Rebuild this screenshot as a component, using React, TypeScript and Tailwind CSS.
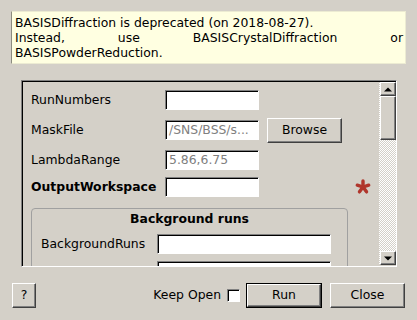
import React from 'react';

const font = { fontFamily: '"DejaVu Sans", Verdana, sans-serif' };

const Field: React.FC<{ w: string; value?: string }> = ({ w, value }) => (
  <div
    className={`${w} h-[20px] bg-white border border-t-[#808080] border-l-[#808080] border-r-white border-b-white shadow-[inset_1px_1px_0_#000] flex items-center pl-[3px] text-[#808080] overflow-hidden whitespace-nowrap`}
  >
    {value}
  </div>
);

const Button: React.FC<{ w: string; label: string; isDefault?: boolean }> = ({ w, label, isDefault }) => {
  const inner = (
    <div className="w-full h-full flex items-center justify-center border border-t-white border-l-white border-r-[#404040] border-b-[#404040] shadow-[inset_-1px_-1px_0_#808080] bg-[#d4d0c8]">
      {label}
    </div>
  );
  if (isDefault) {
    return <div className={`${w} h-[25px] border border-black`}>{inner}</div>;
  }
  return <div className={`${w} h-[25px]`}>{inner}</div>;
};

const Arrow: React.FC<{ up?: boolean }> = ({ up }) => (
  <svg width="8" height="5" viewBox="0 0 8 5">
    {up ? <polygon points="0,4.5 8,4.5 4,0.5" fill="#000" /> : <polygon points="0,0.5 8,0.5 4,4.5" fill="#000" />}
  </svg>
);

const Star: React.FC = () => (
  <svg width="16" height="16" viewBox="-8 -8 16 16">
    {[-90, -18, 54, 126, 198].map((a) => (
      <line
        key={a}
        x1="0"
        y1="0"
        x2={(6 * Math.cos((a * Math.PI) / 180)).toFixed(2)}
        y2={(6 * Math.sin((a * Math.PI) / 180)).toFixed(2)}
        stroke="#b0362c"
        strokeWidth="3.4"
        strokeLinecap="round"
      />
    ))}
  </svg>
);

export default function App() {
  return (
    <div className="w-[417px] h-[320px] bg-[#d4d0c8] text-[12.4px] text-black flex flex-col overflow-hidden" style={font}>
      {/* deprecation notice */}
      <div className="mt-[11px] ml-[11px] w-[395px] h-[53px] bg-[#ffffe1] border border-[#ecebd2] border-l-[#8c8c80] pt-[3px] pl-[3px] pr-[2px] leading-[15px] text-justify">
        BASISDiffraction is deprecated (on 2018-08-27).
        <br />
        <span className="block text-justify [text-align-last:justify]">Instead, use BASISCrystalDiffraction or</span>
        BASISPowderReduction.
      </div>

      {/* scroll area */}
      <div className="mt-[16px] ml-[21px] w-[376px] h-[187px] border border-t-[#808080] border-l-[#808080] border-r-white border-b-white shadow-[inset_1px_1px_0_#000] flex">
        <div className="flex-1 overflow-hidden pl-[9px] pt-[9px]">
          <div className="flex items-center h-[20px]">
            <div className="w-[134px]">RunNumbers</div>
            <Field w="w-[94px]" />
          </div>
          <div className="flex items-center h-[20px] mt-[10px]">
            <div className="w-[134px]">MaskFile</div>
            <Field w="w-[94px]" value="/SNS/BSS/s..." />
            <div className="ml-[8px]">
              <Button w="w-[75px]" label="Browse" />
            </div>
          </div>
          <div className="flex items-center h-[20px] mt-[10px]">
            <div className="w-[134px]">LambdaRange</div>
            <Field w="w-[94px]" value="5.86,6.75" />
          </div>
          <div className="flex items-center h-[20px] mt-[7px]">
            <div className="w-[134px] font-bold">OutputWorkspace</div>
            <Field w="w-[94px]" />
            <div className="ml-[96px] flex items-center">
              <Star />
            </div>
          </div>

          {/* group box */}
          <div className="mt-[11px] w-[317px] h-[80px] border border-[#a0a0a0] rounded-[4px] pl-[9px]">
            <div className="pt-[3px] leading-[14px] font-bold text-center pr-[9px]">Background runs</div>
            <div className="flex items-center h-[20px] mt-[8px]">
              <div className="w-[116px]">BackgroundRuns</div>
              <Field w="w-[174px]" />
            </div>
            <div className="flex items-center h-[20px] mt-[7px]">
              <div className="w-[116px]"></div>
              <Field w="w-[174px]" />
            </div>
          </div>
        </div>

        {/* scrollbar */}
        <div className="w-[17px] mt-[1px] mb-[1px] flex flex-col items-center bg-[image:repeating-conic-gradient(#ffffff_0_25%,#d4d0c8_0_50%)] bg-[length:2px_2px]">
          <div className="w-[16px] h-[14px] bg-[#d4d0c8] border border-t-white border-l-white border-r-[#404040] border-b-[#404040] shadow-[inset_-1px_-1px_0_#808080] flex items-center justify-center">
            <Arrow up />
          </div>
          <div className="w-[16px] h-[44px] bg-[#d4d0c8] border border-t-white border-l-white border-r-[#404040] border-b-[#404040] shadow-[inset_-1px_-1px_0_#808080]" />
          <div className="flex-1" />
          <div className="w-[16px] h-[14px] bg-[#d4d0c8] border border-t-white border-l-white border-r-[#404040] border-b-[#404040] shadow-[inset_-1px_-1px_0_#808080] flex items-center justify-center">
            <Arrow />
          </div>
        </div>
      </div>

      {/* bottom buttons */}
      <div className="mt-[16px] flex items-center px-[12px]">
        <Button w="w-[24px]" label="?" />
        <div className="flex-1" />
        <span>Keep Open</span>
        <div className="ml-[6px] w-[13px] h-[13px] bg-white border border-t-[#808080] border-l-[#808080] border-r-white border-b-white shadow-[inset_1px_1px_0_#000]" />
        <div className="ml-[6px]">
          <Button w="w-[76px]" label="Run" isDefault />
        </div>
        <div className="ml-[8px]">
          <Button w="w-[75px]" label="Close" />
        </div>
      </div>
    </div>
  );
}
